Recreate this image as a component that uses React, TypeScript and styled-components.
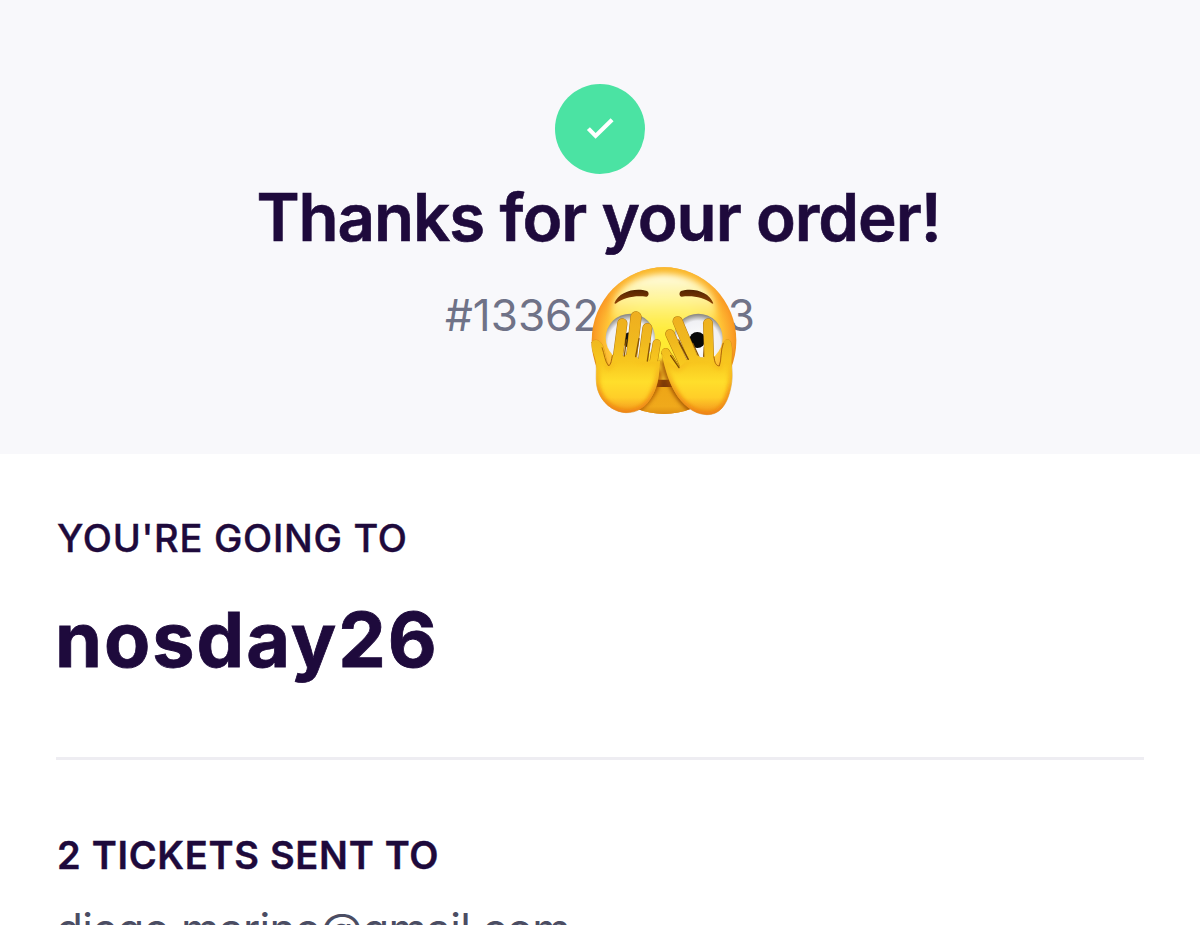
import React from "react";
import styled, { createGlobalStyle } from "styled-components";

const GlobalStyle = createGlobalStyle`
  body {
    margin: 0;
    background: #ffffff;
    font-family: Inter, "Liberation Sans", sans-serif;
    overflow: hidden;
  }
`;

const Page = styled.main`
  height: 925px;
  overflow: hidden;
  display: flex;
  flex-direction: column;
`;

const Hero = styled.header`
  box-sizing: border-box;
  flex: none;
  height: 454px;
  padding-top: 84px;
  display: flex;
  flex-direction: column;
  align-items: center;
  background: #f8f8fb;
`;

const StatusBadge = styled.div`
  width: 90px;
  height: 90px;
  border-radius: 50%;
  background: #4be3a3;
  display: flex;
  align-items: center;
  justify-content: center;
`;

const Title = styled.h1`
  margin: 4px 3px 0 0;
  font-size: 65.5px;
  line-height: 80px;
  font-weight: 600;
  letter-spacing: -1.08px;
  -webkit-text-stroke: 0.6px #1e0a3c;
  color: #1e0a3c;
  white-space: nowrap;
`;

const OrderNumber = styled.p`
  position: relative;
  margin: 30px 0 0;
  font-size: 44px;
  line-height: 54px;
  color: #6f7287;
  white-space: nowrap;
`;

const EmojiSvg = styled.svg`
  position: absolute;
  top: -28px;
  left: 135px;
  width: 170px;
  height: 165px;
`;

const Details = styled.div`
  padding: 61px 56px 0;
`;

const Label = styled.h2<{ $weight: number; $spacing: number }>`
  margin: 0 0 0 1px;
  font-size: 38px;
  line-height: 46px;
  font-weight: ${(p) => p.$weight};
  letter-spacing: ${(p) => p.$spacing}px;
  -webkit-text-stroke: 0.4px #1e0a3c;
  color: #1e0a3c;
  white-space: nowrap;
`;

const EventName = styled.p`
  margin: 34px 0 72px -1px;
  font-size: 75.5px;
  line-height: 90px;
  font-weight: 700;
  letter-spacing: 2px;
  -webkit-text-stroke: 0.8px #1e0a3c;
  color: #1e0a3c;
`;

const Divider = styled.hr`
  margin: 0 0 72px;
  border: 0;
  height: 3px;
  background: #eeedf2;
`;

const Email = styled.p`
  margin: 24px 0 0;
  font-size: 44px;
  line-height: 54px;
  letter-spacing: -0.7px;
  color: #4b4d63;
  white-space: nowrap;
`;

type Finger = [number, number, number, number, number];

const leftFingers: Finger[] = [
  [230, 250, 214, 345, 24],
  [202, 204, 184, 335, 29],
  [168, 171, 150, 330, 33],
  [127, 190, 110, 320, 30],
];

const rightFingers: Finger[] = [
  [257, 277, 300, 345, 25],
  [270, 222, 322, 335, 28],
  [293, 184, 350, 320, 30],
  [384, 190, 388, 320, 29],
];

const leftPalm =
  "M35 247C42 235 61 238 69 259C77 280 77 304 86 318C97 312 96 300 98 286L132 288C138 282 142 284 168 287C178 304 194 304 205 300C213 304 222 304 240 303C238 350 233 377 218 406C198 444 169 459 137 458C98 456 64 426 53 389C45 359 51 333 48 308C45 287 33 270 35 247Z";

const rightPalm =
  "M245 280C257 298 276 318 296 322C307 314 317 307 324 297C338 300 344 294 354 286C359 294 366 294 374 291L401 292C405 312 410 318 418 318C426 300 421 273 430 249C438 233 452 236 454 254C458 274 454 291 455 313C456 337 459 357 451 389C440 437 417 465 380 464C340 463 306 433 285 397C270 371 255 333 245 280Z";

function Hand({ id, fingers, palm }: { id: string; fingers: Finger[]; palm: string }) {
  return (
    <g>
      <g fill="none" stroke="#b47a0c" strokeLinecap="round">
        <path d={palm} strokeWidth="2" strokeOpacity="0.7" />
        {fingers.map(([x1, y1, x2, y2, w]) => (
          <path key={x1} d={`M${x1} ${y1}L${x2} ${y2}`} strokeWidth={w + 1} />
        ))}
      </g>
      <g stroke="url(#skin)" strokeLinecap="round">
        {fingers.map(([x1, y1, x2, y2, w]) => (
          <path key={x1} d={`M${x1} ${y1}L${x2} ${y2}`} strokeWidth={w - 2} />
        ))}
        <path d={palm} fill="url(#skin)" stroke="none" />
      </g>
      <clipPath id={id}>
        <path d={palm} />
      </clipPath>
      <g clipPath={`url(#${id})`}>
        <g mask="url(#lower)">
          <path
            d={palm}
            fill="none"
            stroke="#ec7c10"
            strokeOpacity="0.8"
            strokeWidth="18"
            filter="url(#soft)"
          />
        </g>
      </g>
    </g>
  );
}

function PeekingEmoji() {
  return (
    <EmojiSvg viewBox="0 0 510 495" aria-hidden="true">
      <defs>
        <radialGradient id="face" gradientUnits="userSpaceOnUse" cx="252" cy="232" r="226">
          <stop offset="0" stopColor="#ffec2c" />
          <stop offset="0.5" stopColor="#ffe240" />
          <stop offset="0.75" stopColor="#ffc838" />
          <stop offset="0.92" stopColor="#fb9d26" />
          <stop offset="1" stopColor="#e78812" />
        </radialGradient>
        <linearGradient id="crown" x1="0" y1="0" x2="0" y2="1">
          <stop offset="0" stopColor="#f9bb28" stopOpacity="0.9" />
          <stop offset="0.22" stopColor="#ffd23a" stopOpacity="0" />
        </linearGradient>
        <linearGradient id="shine" x1="0" y1="0" x2="0" y2="1">
          <stop offset="0" stopColor="#fffde6" />
          <stop offset="0.35" stopColor="#fffbb0" stopOpacity="0.8" />
          <stop offset="0.75" stopColor="#fff36a" stopOpacity="0.3" />
          <stop offset="1" stopColor="#ffec55" stopOpacity="0" />
        </linearGradient>
        <linearGradient id="chin" x1="0" y1="0" x2="0" y2="1">
          <stop offset="0" stopColor="#eea616" />
          <stop offset="0.6" stopColor="#f0a91b" />
          <stop offset="1" stopColor="#d07c0c" />
        </linearGradient>
        <radialGradient id="eye" cx="0.5" cy="0.6" r="0.58">
          <stop offset="0" stopColor="#ffffff" />
          <stop offset="0.78" stopColor="#f0f0f4" />
          <stop offset="1" stopColor="#8f8c86" />
        </radialGradient>
        <linearGradient id="skin" gradientUnits="userSpaceOnUse" x1="0" y1="155" x2="0" y2="465">
          <stop offset="0" stopColor="#eeae20" />
          <stop offset="0.3" stopColor="#f0b91e" />
          <stop offset="0.5" stopColor="#f8c81f" />
          <stop offset="0.68" stopColor="#ffde2b" />
          <stop offset="0.83" stopColor="#ffce28" />
          <stop offset="1" stopColor="#f28f1c" />
        </linearGradient>
        <linearGradient id="fade" gradientUnits="userSpaceOnUse" x1="0" y1="300" x2="0" y2="400">
          <stop offset="0" stopColor="#000000" />
          <stop offset="1" stopColor="#ffffff" />
        </linearGradient>
        <mask id="lower" maskUnits="userSpaceOnUse" x="0" y="0" width="510" height="495">
          <rect width="510" height="495" fill="url(#fade)" />
        </mask>
        <linearGradient id="brow" x1="0" y1="0" x2="0" y2="1">
          <stop offset="0" stopColor="#512302" />
          <stop offset="1" stopColor="#8f4204" />
        </linearGradient>
        <filter id="soft" x="-20%" y="-20%" width="140%" height="140%">
          <feGaussianBlur stdDeviation="6" />
        </filter>
        <filter id="softer" x="-20%" y="-20%" width="140%" height="140%">
          <feGaussianBlur stdDeviation="10" />
        </filter>
        <clipPath id="headClip">
          <ellipse cx="252" cy="242" rx="217" ry="220" />
        </clipPath>
      </defs>

      <ellipse cx="252" cy="242" rx="217" ry="220" fill="url(#face)" />
      <ellipse cx="252" cy="242" rx="217" ry="220" fill="url(#crown)" />
      <ellipse cx="252" cy="150" rx="155" ry="108" fill="url(#shine)" filter="url(#softer)" />

      <path d="M103 130C115 94 168 82 201 93C209 98 206 110 199 110C163 106 134 112 107 131Z" fill="url(#brow)" />
      <path d="M400 130C388 94 337 82 303 93C296 98 298 110 305 110C341 106 370 112 397 131Z" fill="url(#brow)" />

      <ellipse cx="151" cy="234" rx="74" ry="73" fill="url(#eye)" />
      <ellipse cx="355" cy="234" rx="73" ry="73" fill="url(#eye)" />
      <circle cx="150" cy="240" r="23" fill="#111111" />
      <circle cx="352" cy="240" r="24" fill="#080808" />

      <g clipPath="url(#headClip)">
        <path d="M170 378H340V480H170Z" fill="url(#chin)" />
        <path d="M215 300H290V360H215Z" fill="#f3b31d" fillOpacity="0.6" filter="url(#soft)" />
        <path d="M205 359H300V381H205Z" fill="#7d3907" />
        <path d="M238 330C244 380 200 440 150 466" stroke="#a94f06" strokeWidth="12" fill="none" filter="url(#soft)" />
        <path d="M250 300C262 370 300 430 360 470" stroke="#9a4806" strokeWidth="14" fill="none" filter="url(#soft)" />
      </g>

      <Hand id="handL" fingers={leftFingers} palm={leftPalm} />
      <path d="M66 262C74 284 74 304 86 318C94 312 94 300 97 286" fill="none" stroke="#b06a0a" strokeWidth="3" />
      <g stroke="#8a5604" strokeWidth="4" strokeLinecap="round">
        <path d="M139 240L133 288M177 236L167 290M210 250L202 303" />
        <path d="M277 287L297 323M296 240L325 299M338 250L356 289M373 262L371 289" />
      </g>

      <Hand id="handR" fingers={rightFingers} palm={rightPalm} />
      <path d="M402 290C404 309 408 317 418 318C425 300 421 273 430 249" fill="none" stroke="#b06a0a" strokeWidth="3" />
      <g stroke="#7d4b02" strokeWidth="4" strokeLinecap="round">
        <path d="M272 287L297 323M298 248L325 298" />
      </g>
    </EmojiSvg>
  );
}

export default function App() {
  return (
    <>
      <GlobalStyle />
      <Page>
        <Hero>
          <StatusBadge>
            <svg width="90" height="90" viewBox="0 0 90 90" fill="none" aria-hidden="true">
              <path d="M33.4 44.6L40.6 51.9L57.1 35.8" stroke="#ffffff" strokeWidth="4.2" />
            </svg>
          </StatusBadge>
          <Title>Thanks for your order!</Title>
          <OrderNumber>
            #13362014893
            <PeekingEmoji />
          </OrderNumber>
        </Hero>
        <Details>
          <Label $weight={500} $spacing={0.72}>YOU'RE GOING TO</Label>
          <EventName>nosday26</EventName>
          <Divider />
          <Label $weight={600} $spacing={0.7}>2 TICKETS SENT TO</Label>
          <Email>diego.marino@gmail.com</Email>
        </Details>
      </Page>
    </>
  );
}
